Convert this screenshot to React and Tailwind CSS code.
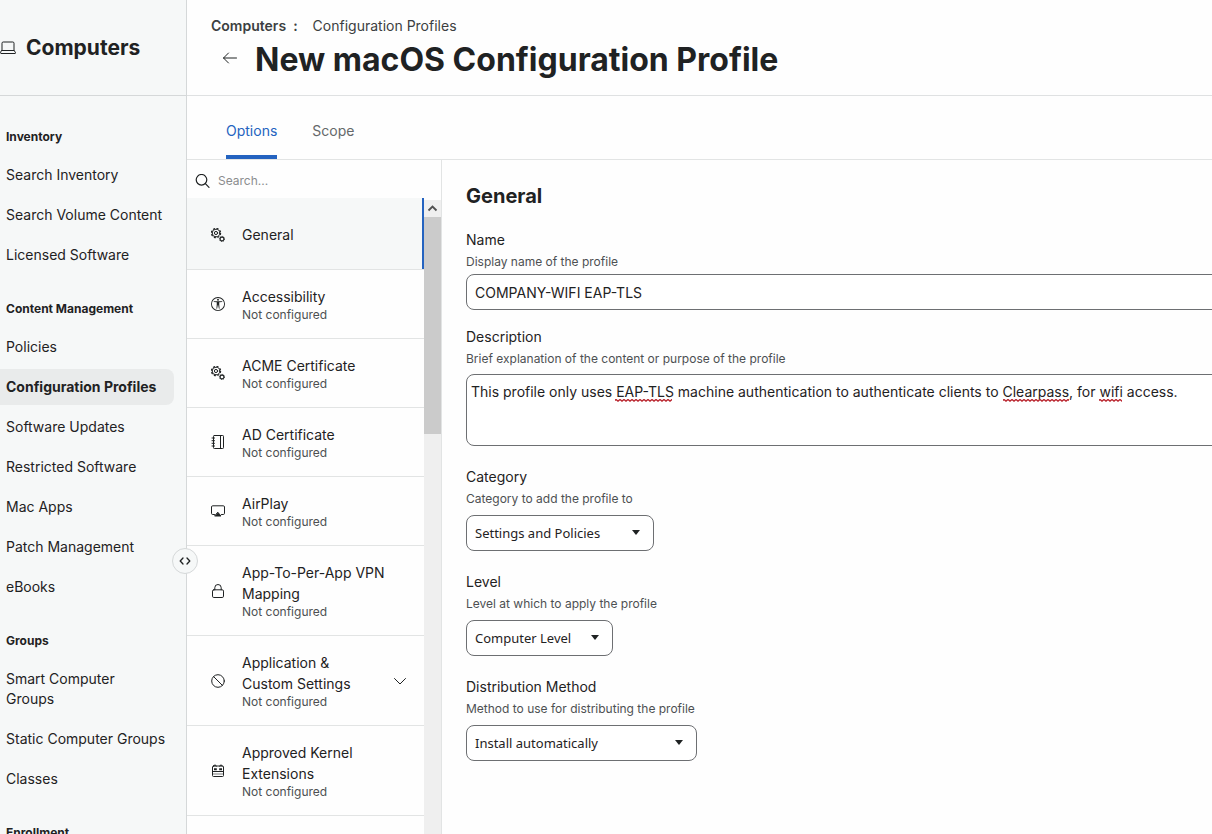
import React, { useState } from 'react';
import { BsUniversalAccessCircle } from 'react-icons/bs';

const NAV_SECTIONS = [
  { title: 'Inventory', items: ['Search Inventory', 'Search Volume Content', 'Licensed Software'] },
  {
    title: 'Content Management',
    items: [
      'Policies',
      'Configuration Profiles',
      'Software Updates',
      'Restricted Software',
      'Mac Apps',
      'Patch Management',
      'eBooks',
    ],
  },
  { title: 'Groups', items: ['Smart Computer Groups', 'Static Computer Groups', 'Classes'] },
  { title: 'Enrollment', items: [] },
];

const Icon = ({ children, className = 'size-[14px]', viewBox = '0 0 14 14' }) => (
  <svg className={`shrink-0 ${className}`} viewBox={viewBox} fill="none" stroke="currentColor" strokeWidth="1" strokeLinecap="round" strokeLinejoin="round" aria-hidden="true">
    {children}
  </svg>
);

const GearsIcon = () => (
  <Icon>
    <circle cx="5" cy="5" r="3.8" />
    <circle cx="5" cy="5" r="4.6" strokeWidth="1.2" strokeLinecap="butt" strokeDasharray="2 1.61" />
    <circle cx="5" cy="5" r="1.6" />
    <circle cx="11" cy="11" r="1.9" strokeWidth="1.1" />
    <circle cx="11" cy="11" r="2.6" strokeWidth="0.9" strokeLinecap="butt" strokeDasharray="1.14 0.9" />
  </Icon>
);

const NotebookIcon = () => (
  <Icon>
    <rect x="2.5" y="0.5" width="10" height="13" rx="0.8" />
    <path d="M9.5 0.5v13M1 3h2.5M1 5.7h2.5M1 8.3h2.5M1 11h2.5" />
  </Icon>
);

const AirPlayIcon = () => (
  <Icon>
    <path d="M3.5 10.5H1.7A1.2 1.2 0 0 1 0.5 9.3V3a1.2 1.2 0 0 1 1.2-1.2h10.6A1.2 1.2 0 0 1 13.5 3v6.3a1.2 1.2 0 0 1-1.2 1.2h-1.8" />
    <path d="M7 8.500l3 3.500H4z" fill="currentColor" />
  </Icon>
);

const LockIcon = () => (
  <Icon>
    <rect x="1.5" y="5.8" width="11" height="7.7" rx="1.3" />
    <path d="M3.8 5.8V3.7a3.2 3.2 0 0 1 6.4 0v2.1" />
  </Icon>
);

const BlockIcon = () => (
  <Icon>
    <circle cx="7" cy="7" r="6.3" />
    <path d="M2.6 2.6l8.8 8.8" />
  </Icon>
);

const KernelIcon = () => (
  <Icon>
    <rect x="1.500" y="2" width="11" height="10.500" rx="1" />
    <path d="M2 7.500h10" />
    <path d="M2 10h10" strokeWidth="0.6" />
    <path d="M3 5.200h2.800M8.200 5.200H11" strokeWidth="2" strokeLinecap="butt" />
    <path d="M2.700 2.300a1.300 1.300 0 0 1 2.600 0M8.700 2.300a1.300 1.300 0 0 1 2.600 0" />
  </Icon>
);

const AccessIcon = () => <BsUniversalAccessCircle className="size-[14px] shrink-0" aria-hidden="true" />;

const PAYLOADS = [
  { name: 'Accessibility', icon: AccessIcon },
  { name: 'ACME Certificate', icon: GearsIcon },
  { name: 'AD Certificate', icon: NotebookIcon },
  { name: 'AirPlay', icon: AirPlayIcon },
  { name: 'App-To-Per-App VPN Mapping', icon: LockIcon },
  { name: 'Application & Custom Settings', icon: BlockIcon, expandable: true },
  { name: 'Approved Kernel Extensions', icon: KernelIcon },
];

const Sidebar = () => (
  <aside className="relative flex w-[187px] shrink-0 flex-col border-r border-[#d5d8d9] bg-[#f6f8f8]">
    <div className="flex h-24 shrink-0 items-center gap-[10px] border-b border-[#d5d8d9]">
      <Icon className="h-4 w-4" viewBox="0 0 16 16">
        <path d="M2 10.500V3.200A1.200 1.200 0 0 1 3.200 2h9.600A1.200 1.200 0 0 1 14 3.200v7.300" />
        <path d="M1.800 10.500h12.400l1.300 2.200a.6.600 0 0 1-.5.800H1a.6.600 0 0 1-.5-.8z" />
      </Icon>
      <h2 className="text-[21px] font-bold">Computers</h2>
    </div>

    <nav className="flex min-h-0 flex-col gap-[26px] overflow-hidden pt-[31px] pr-3">
      {NAV_SECTIONS.map((section) => (
        <section key={section.title}>
          <h3 className="mb-[10px] pl-[6px] text-xs leading-5 font-bold">{section.title}</h3>
          <ul className="space-y-1">
            {section.items.map((item) => (
              <li key={item}>
                <a
                  href="#"
                  className={
                    item === 'Configuration Profiles'
                      ? 'block rounded-r-lg bg-[#e9ebeb] py-2 pr-2 pl-[6px] text-sm leading-5 font-bold'
                      : 'block py-2 pr-2 pl-[6px] text-sm leading-5'
                  }
                >
                  {item}
                </a>
              </li>
            ))}
          </ul>
        </section>
      ))}
    </nav>

    {/* Collapse handle sits on the sidebar edge */}
    <button
      type="button"
      aria-label="Resize sidebar"
      className="absolute top-[548px] -right-3 z-10 flex size-[26px] items-center justify-center rounded-full border border-[#d5d8d9] bg-[#f6f8f8]"
    >
      <Icon className="size-3" viewBox="0 0 12 12">
        <path d="M4 3L1.200 6L4 9M8 3l2.800 3L8 9" strokeWidth="1.3" />
      </Icon>
    </button>
  </aside>
);

const PayloadList = () => (
  <div className="flex w-[255px] shrink-0 flex-col border-r border-[#e2e4e4]">
    <label className="flex h-[38px] shrink-0 items-center gap-2 px-2 pt-1">
      <Icon className="h-[15px] w-[15px]" viewBox="0 0 15 15">
        <circle cx="6.500" cy="5.800" r="5.300" strokeWidth="1.200" />
        <path d="M10.400 9.700l3.600 3.600" strokeWidth="1.200" />
      </Icon>
      <input type="search" aria-label="Search payloads" placeholder="Search..." className="min-w-0 flex-1 bg-transparent text-xs placeholder-[#8b8d8e] outline-none" />
    </label>

    <div className="flex min-h-0 flex-1">
      <ul className="min-w-0 flex-1 overflow-hidden">
        <li className="border-b border-[#e2e4e4]">
          <button type="button" className="flex h-[71px] w-full items-center gap-[17px] border-r-2 border-[#2463c0] bg-[#f6f8f8] pt-[2px] pl-6 text-left text-sm">
            <GearsIcon />
            General
          </button>
        </li>
        {PAYLOADS.map(({ name, icon: PayloadIcon, expandable }) => (
          <li key={name} className="border-b border-[#e2e4e4]">
            <button type="button" className="flex w-full items-center gap-[17px] py-4 pr-[17px] pl-6 text-left">
              <PayloadIcon />
              <span className="min-w-0 flex-1">
                <span className={expandable ? 'block w-[120px] text-sm leading-[21px]' : 'block text-sm leading-[21px]'}>{name}</span>
                <span className="block text-xs leading-[15px] text-[#4d5052]">Not configured</span>
              </span>
              {expandable && (
                <Icon>
                  <path d="M1.500 4.500L7 10l5.500-5.500" />
                </Icon>
              )}
            </button>
          </li>
        ))}
      </ul>

      {/* Scrollbar */}
      <div className="mt-[2px] w-[17px] shrink-0 bg-[#efefef]" aria-hidden="true">
        <div className="flex h-[17px] items-center justify-center text-[#505050]">
          <Icon className="size-[11px]" viewBox="0 0 11 11">
            <path d="M1.500 7.500l4-4 4 4" strokeWidth="1.800" strokeLinecap="butt" strokeLinejoin="miter" />
          </Icon>
        </div>
        <div className="h-[217px] bg-[#cbcbcb]"></div>
      </div>
    </div>
  </div>
);

const FieldLabel = ({ id, label, hint }) => (
  <label htmlFor={id} className="block">
    <span className="block text-sm leading-5">{label}</span>
    <span className="mt-[2px] block text-xs leading-5 text-[#4d5052]">{hint}</span>
  </label>
);

const SelectField = ({ id, label, hint, value, width }) => (
  <div className="mt-[21px]">
    <FieldLabel id={id} label={label} hint={hint} />
    <div className={`relative mt-[6px] ${width}`}>
      <select
        id={id}
        defaultValue={value}
        className="h-9 w-full appearance-none rounded-lg border border-[#6d6f72] bg-white pt-[2px] pl-2 font-['Noto_Sans',sans-serif] text-[13px] outline-none"
      >
        <option>{value}</option>
      </select>
      <svg className="pointer-events-none absolute top-[15px] right-[14px] h-[5px] w-2" viewBox="0 0 8 5" fill="currentColor" aria-hidden="true">
        <path d="M0 0h8L4 5z" />
      </svg>
    </div>
  </div>
);

const App = () => {
  const [name, setName] = useState('COMPANY-WIFI EAP-TLS');
  const [description, setDescription] = useState(
    'This profile only uses EAP-TLS machine authentication to authenticate clients to Clearpass, for wifi access.'
  );

  return (
    <div className="flex h-screen overflow-hidden bg-[#fefefe] font-['Inter',sans-serif] text-[#1f2223]">
      <Sidebar />

      <div className="flex min-w-0 flex-1 flex-col">
        <header className="h-24 shrink-0 border-b border-[#dfe1e2] pt-4 pl-6">
          <div className="flex gap-[15px] text-sm leading-5 text-[#3c3f41]">
            <a href="#" className="font-semibold">Computers&nbsp; :</a>
            <a href="#">Configuration Profiles</a>
          </div>
          <div className="flex items-center gap-4 pl-3">
            <button type="button" aria-label="Back" className="pb-1">
              <Icon className="size-4" viewBox="0 0 16 16">
                <path d="M13.500 8h-13M5.500 3L0.500 8l5 5" />
              </Icon>
            </button>
            <h1 className="text-[32px] leading-[48px] font-bold">New macOS Configuration Profile</h1>
          </div>
        </header>

        <div className="flex h-16 shrink-0 gap-[35px] border-b border-[#e2e4e4] pl-[39px] text-sm" role="tablist">
          <button type="button" role="tab" aria-selected="true" className="border-b-4 border-[#2463c0] pt-[10px] text-[#2463c0]">Options</button>
          <button type="button" role="tab" aria-selected="false" className="border-b-4 border-transparent pt-[10px] text-[#65686a]">Scope</button>
        </div>

        <div className="flex min-h-0 flex-1">
          <PayloadList />

          <main className="min-w-0 flex-1 overflow-hidden pt-[22px] pl-6">
            <h2 className="text-xl leading-7 font-bold">General</h2>

            <div className="-mr-3 mt-5">
              <FieldLabel id="name" label="Name" hint="Display name of the profile" />
              <input
                id="name"
                type="text"
                value={name}
                onChange={(e) => setName(e.target.value)}
                className="mt-[2px] block h-9 w-full rounded-lg border border-[#6d6f72] bg-white px-2 text-sm outline-none"
              />
            </div>

            <div className="-mr-3 mt-[17px]">
              <FieldLabel id="description" label="Description" hint="Brief explanation of the content or purpose of the profile" />
              <div className="relative mt-[5px]">
                <textarea
                  id="description"
                  value={description}
                  spellCheck="false"
                  onChange={(e) => setDescription(e.target.value)}
                  className="block h-[72px] w-full resize-none rounded-lg border border-[#6d6f72] bg-white px-1 py-[7px] text-sm leading-5 outline-none"
                />
                {/* Spelling marks */}
                <svg className="pointer-events-none absolute top-[25px] left-0 h-[3px] w-[670px]" aria-hidden="true">
                  <defs>
                    <pattern id="squiggle" width="4" height="3" patternUnits="userSpaceOnUse">
                      <path d="M-1 3L2 0.500L5 3" fill="none" stroke="#b8202a" strokeWidth="1.300" />
                    </pattern>
                  </defs>
                  <rect x="149" width="57" height="3" fill="url(#squiggle)" />
                  <rect x="537" width="66" height="3" fill="url(#squiggle)" />
                  <rect x="633" width="23" height="3" fill="url(#squiggle)" />
                </svg>
              </div>
            </div>

            <SelectField id="category" label="Category" hint="Category to add the profile to" value="Settings and Policies" width="w-[188px]" />
            <SelectField id="level" label="Level" hint="Level at which to apply the profile" value="Computer Level" width="w-[147px]" />
            <SelectField id="distribution" label="Distribution Method" hint="Method to use for distributing the profile" value="Install automatically" width="w-[231px]" />
          </main>
        </div>
      </div>
    </div>
  );
};

export default App;
